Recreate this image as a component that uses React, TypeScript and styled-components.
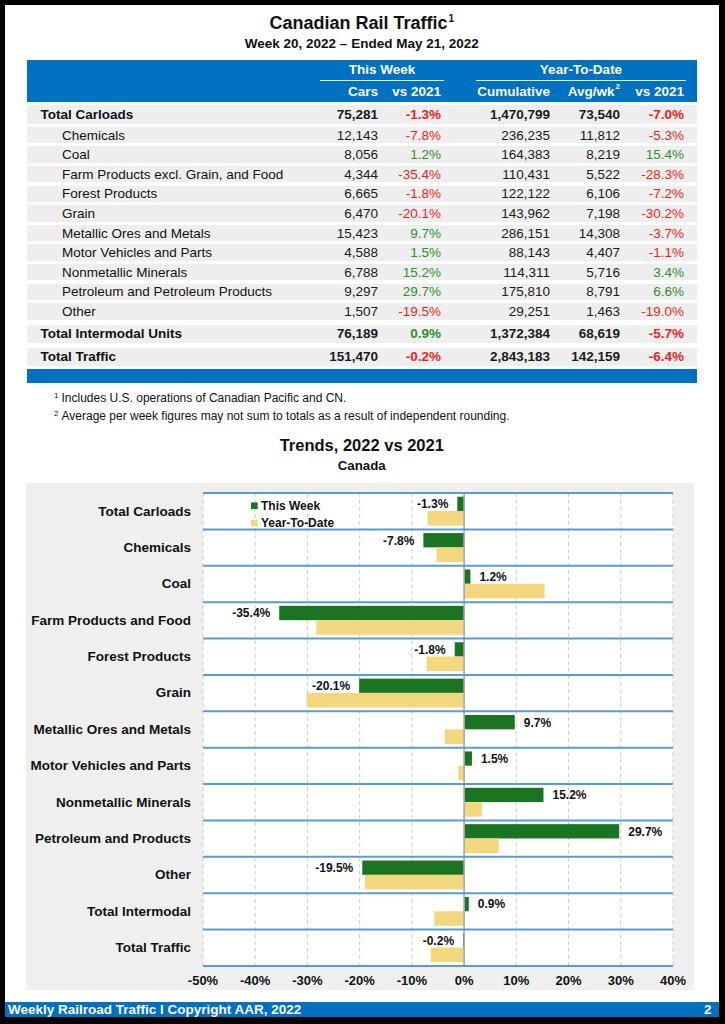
import React from "react";
import styled, { createGlobalStyle } from "styled-components";

const BLUE = "#0070c0";
const RED = "#f01e23";
const GREEN = "#2e8f32";
const COLS = "286px 65px 63px 109px 70px 64px 13px";

type Row = {
  label: string;
  cars: string;
  carsPct: number;
  cum: string;
  avg: string;
  ytdPct: number;
  kind: "total" | "sub" | "grand";
};

const tableRows: Row[] = [
  { label: "Total Carloads", cars: "75,281", carsPct: -1.3, cum: "1,470,799", avg: "73,540", ytdPct: -7.0, kind: "total" },
  { label: "Chemicals", cars: "12,143", carsPct: -7.8, cum: "236,235", avg: "11,812", ytdPct: -5.3, kind: "sub" },
  { label: "Coal", cars: "8,056", carsPct: 1.2, cum: "164,383", avg: "8,219", ytdPct: 15.4, kind: "sub" },
  { label: "Farm Products excl. Grain, and Food", cars: "4,344", carsPct: -35.4, cum: "110,431", avg: "5,522", ytdPct: -28.3, kind: "sub" },
  { label: "Forest Products", cars: "6,665", carsPct: -1.8, cum: "122,122", avg: "6,106", ytdPct: -7.2, kind: "sub" },
  { label: "Grain", cars: "6,470", carsPct: -20.1, cum: "143,962", avg: "7,198", ytdPct: -30.2, kind: "sub" },
  { label: "Metallic Ores and Metals", cars: "15,423", carsPct: 9.7, cum: "286,151", avg: "14,308", ytdPct: -3.7, kind: "sub" },
  { label: "Motor Vehicles and Parts", cars: "4,588", carsPct: 1.5, cum: "88,143", avg: "4,407", ytdPct: -1.1, kind: "sub" },
  { label: "Nonmetallic Minerals", cars: "6,788", carsPct: 15.2, cum: "114,311", avg: "5,716", ytdPct: 3.4, kind: "sub" },
  { label: "Petroleum and Petroleum Products", cars: "9,297", carsPct: 29.7, cum: "175,810", avg: "8,791", ytdPct: 6.6, kind: "sub" },
  { label: "Other", cars: "1,507", carsPct: -19.5, cum: "29,251", avg: "1,463", ytdPct: -19.0, kind: "sub" },
  { label: "Total Intermodal Units", cars: "76,189", carsPct: 0.9, cum: "1,372,384", avg: "68,619", ytdPct: -5.7, kind: "grand" },
  { label: "Total Traffic", cars: "151,470", carsPct: -0.2, cum: "2,843,183", avg: "142,159", ytdPct: -6.4, kind: "grand" },
];

const chartRows: [string, number, number][] = [
  ["Total Carloads", -1.3, -7.0],
  ["Chemicals", -7.8, -5.3],
  ["Coal", 1.2, 15.4],
  ["Farm Products and Food", -35.4, -28.3],
  ["Forest Products", -1.8, -7.2],
  ["Grain", -20.1, -30.2],
  ["Metallic Ores and Metals", 9.7, -3.7],
  ["Motor Vehicles and Parts", 1.5, -1.1],
  ["Nonmetallic Minerals", 15.2, 3.4],
  ["Petroleum and Products", 29.7, 6.6],
  ["Other", -19.5, -19.0],
  ["Total Intermodal", 0.9, -5.7],
  ["Total Traffic", -0.2, -6.4],
];

const pct = (v: number) => `${v.toFixed(1)}%`;

function TrendChart() {
  const W = 470;
  const H = 473;
  const ROW = H / chartRows.length;
  const x = (v: number) => ((v + 50) * W) / 90;
  const zero = x(0);
  const ticks = [-50, -40, -30, -20, -10, 0, 10, 20, 30, 40];

  return (
    <PlotSvg width={W} height={H + 24} viewBox={`0 0 ${W} ${H + 24}`}>
      <rect x={0} y={0} width={W} height={H} fill="#fff" />
      {ticks.map((t) => (
        <line key={t} x1={x(t)} x2={x(t)} y1={0} y2={H} stroke="#cdcdcd" strokeWidth={1} strokeDasharray="4 3" />
      ))}
      {chartRows.map(([name, week, ytd], i) => {
        const y0 = i * ROW;
        const wx = Math.min(zero, x(week));
        const yx = Math.min(zero, x(ytd));
        const neg = week < 0;
        return (
          <g key={name}>
            <rect x={wx} y={y0 + 3.7} width={Math.abs(x(week) - zero)} height={14.3} fill="#1b7421" />
            <rect x={yx} y={y0 + 18} width={Math.abs(x(ytd) - zero)} height={14.6} fill="#f2d77f" />
            <ValueText x={neg ? x(week) - 9 : x(week) + 9} y={y0 + 15.2} textAnchor={neg ? "end" : "start"}>
              {pct(week)}
            </ValueText>
          </g>
        );
      })}
      <line x1={zero} x2={zero} y1={0} y2={H} stroke="#a9a9a9" strokeWidth={1.6} />
      {chartRows.map((_, i) => (
        <line key={i} x1={0} x2={W} y1={i * ROW} y2={i * ROW} stroke="#5b9bd5" strokeWidth={2} />
      ))}
      <line x1={0} x2={W} y1={H} y2={H} stroke="#5b9bd5" strokeWidth={2} />
      <rect x={48} y={9.4} width={6.7} height={6.7} fill="#1b7421" />
      <ValueText x={58} y={17}>This Week</ValueText>
      <rect x={48} y={26.7} width={6.7} height={6.7} fill="#f2d77f" />
      <ValueText x={58} y={34.3}>Year-To-Date</ValueText>
      {ticks.map((t) => (
        <AxisText key={t} x={x(t)} y={H + 18.5} textAnchor="middle">
          {t}%
        </AxisText>
      ))}
    </PlotSvg>
  );
}

export default function App() {
  return (
    <>
      <GlobalStyle />
      <Page>
        <Title>
          Canadian Rail Traffic<TitleSup>1</TitleSup>
        </Title>
        <Subtitle>Week 20, 2022 – Ended May 21, 2022</Subtitle>

        <Table>
          <HeaderBand>
            <GroupTitle $start={2} $end={4} $ml={7} $mr={-3}>This Week</GroupTitle>
            <GroupTitle $start={4} $end={7} $ml={35} $mr={-2}>Year-To-Date</GroupTitle>
            <ColHead $col={2}>Cars</ColHead>
            <ColHead $col={3}>vs 2021</ColHead>
            <ColHead $col={4}>Cumulative</ColHead>
            <ColHead $col={5}>
              Avg/wk<Sup>2</Sup>
            </ColHead>
            <ColHead $col={6}>vs 2021</ColHead>
          </HeaderBand>
          {tableRows.map((r) => (
            <DataRow key={r.label} $kind={r.kind}>
              <RowLabel $indent={r.kind === "sub"}>{r.label}</RowLabel>
              <Num>{r.cars}</Num>
              <Num $tone={r.carsPct < 0 ? "neg" : "pos"}>{pct(r.carsPct)}</Num>
              <Num>{r.cum}</Num>
              <Num>{r.avg}</Num>
              <Num $tone={r.ytdPct < 0 ? "neg" : "pos"}>{pct(r.ytdPct)}</Num>
            </DataRow>
          ))}
          <BottomBar />
        </Table>

        <Footnotes>
          <p>
            <Mark>1</Mark>Includes U.S. operations of Canadian Pacific and CN.
          </p>
          <p>
            <Mark>2</Mark>Average per week figures may not sum to totals as a result of independent rounding.
          </p>
        </Footnotes>

        <ChartTitle>Trends, 2022 vs 2021</ChartTitle>
        <ChartSubtitle>Canada</ChartSubtitle>

        <Panel>
          <Categories>
            {chartRows.map(([name]) => (
              <Category key={name}>{name}</Category>
            ))}
          </Categories>
          <TrendChart />
        </Panel>

        <Footer>
          <span>Weekly Railroad Traffic l Copyright AAR, 2022</span>
          <span>2</span>
        </Footer>
      </Page>
    </>
  );
}

const GlobalStyle = createGlobalStyle`
  html, body {
    margin: 0;
    padding: 0;
    background: #000;
  }
  body {
    font-family: "Liberation Sans", Arial, sans-serif;
  }
  p {
    margin: 0;
  }
`;

const Page = styled.div`
  box-sizing: border-box;
  margin: 5px 0 0 5px;
  width: 713.5px;
  height: 1012px;
  background: #fff;
  color: #111;
  display: flex;
  flex-direction: column;
`;

const Title = styled.h1`
  margin: 8px 0 0;
  font-size: 18px;
  line-height: 20px;
  font-weight: bold;
  text-align: center;
`;

const TitleSup = styled.span`
  font-size: 10px;
  vertical-align: baseline;
  position: relative;
  top: -7px;
  margin-left: 1px;
`;

const Subtitle = styled.h2`
  margin: -1px 0 0;
  font-size: 13.5px;
  line-height: 18px;
  font-weight: bold;
  text-align: center;
`;

const Table = styled.div`
  margin: 6.7px 0 0 22px;
  width: 670px;
  display: flex;
  flex-direction: column;
`;

const HeaderBand = styled.div`
  display: grid;
  grid-template-columns: ${COLS};
  grid-template-rows: 21.5px 20.5px;
  background: ${BLUE};
  color: #fff;
  font-size: 13.5px;
  font-weight: bold;
`;

const GroupTitle = styled.div<{ $start: number; $end: number; $ml: number; $mr: number }>`
  grid-row: 1;
  grid-column: ${(p) => p.$start} / ${(p) => p.$end};
  margin: 0 ${(p) => p.$mr}px 0 ${(p) => p.$ml}px;
  border-bottom: 1.5px solid #e8f1fa;
  display: flex;
  align-items: center;
  justify-content: center;
`;

const ColHead = styled.div<{ $col: number }>`
  grid-row: 2;
  grid-column: ${(p) => p.$col};
  display: flex;
  align-items: center;
  justify-content: flex-end;
  white-space: nowrap;
`;

const Sup = styled.span`
  font-size: 8px;
  position: relative;
  top: -5px;
  margin-left: 1px;
`;

const DataRow = styled.div<{ $kind: "total" | "sub" | "grand" }>`
  display: grid;
  grid-template-columns: ${COLS};
  align-items: center;
  background: #eeeeee;
  font-size: 13.5px;
  font-weight: ${(p) => (p.$kind === "sub" ? "normal" : "bold")};
  height: ${(p) => (p.$kind === "total" ? 19 : p.$kind === "grand" ? 18 : 16.5)}px;
  margin-top: ${(p) => (p.$kind === "total" ? 3 : p.$kind === "grand" ? 5 : 3.1)}px;
`;

const RowLabel = styled.div<{ $indent: boolean }>`
  padding-left: ${(p) => (p.$indent ? 35 : 13.5)}px;
  white-space: nowrap;
`;

const Num = styled.div<{ $tone?: "neg" | "pos" }>`
  text-align: right;
  color: ${(p) => (p.$tone === "neg" ? RED : p.$tone === "pos" ? GREEN : "#1a1a1a")};
`;

const BottomBar = styled.div`
  height: 14.5px;
  margin-top: 3px;
  background: ${BLUE};
`;

const Footnotes = styled.div`
  margin: 6.5px 0 0 49px;
  font-size: 12px;
  line-height: 17.6px;
`;

const Mark = styled.span`
  display: inline-block;
  width: 7.5px;
  font-size: 8px;
  position: relative;
  top: -4px;
`;

const ChartTitle = styled.h2`
  margin: 8px 0 0;
  font-size: 16.5px;
  line-height: 20px;
  font-weight: bold;
  text-align: center;
`;

const ChartSubtitle = styled.h3`
  margin: 3px 0 0;
  font-size: 13.3px;
  line-height: 16px;
  font-weight: bold;
  text-align: center;
`;

const Panel = styled.div`
  box-sizing: border-box;
  margin: 9px 0 0 21px;
  width: 668px;
  height: 507px;
  padding-top: 10px;
  background: #efefef;
  display: grid;
  grid-template-columns: 177px 470px;
  align-items: start;
`;

const Categories = styled.div`
  height: 473px;
  display: grid;
  grid-template-rows: repeat(13, 1fr);
`;

const Category = styled.div`
  display: flex;
  align-items: center;
  justify-content: flex-end;
  padding-right: 12px;
  font-size: 13.5px;
  font-weight: bold;
  white-space: nowrap;
`;

const PlotSvg = styled.svg`
  display: block;
  overflow: visible;
`;

const ValueText = styled.text`
  font-family: "Liberation Sans", Arial, sans-serif;
  font-size: 12px;
  font-weight: bold;
  fill: #111;
`;

const AxisText = styled.text`
  font-family: "Liberation Sans", Arial, sans-serif;
  font-size: 13px;
  font-weight: bold;
  fill: #111;
`;

const Footer = styled.footer`
  margin-top: auto;
  height: 15.5px;
  padding: 0 7px 0 3px;
  background: ${BLUE};
  color: #fff;
  font-size: 13.5px;
  font-weight: bold;
  line-height: 1;
  display: flex;
  align-items: center;
  justify-content: space-between;
`;
